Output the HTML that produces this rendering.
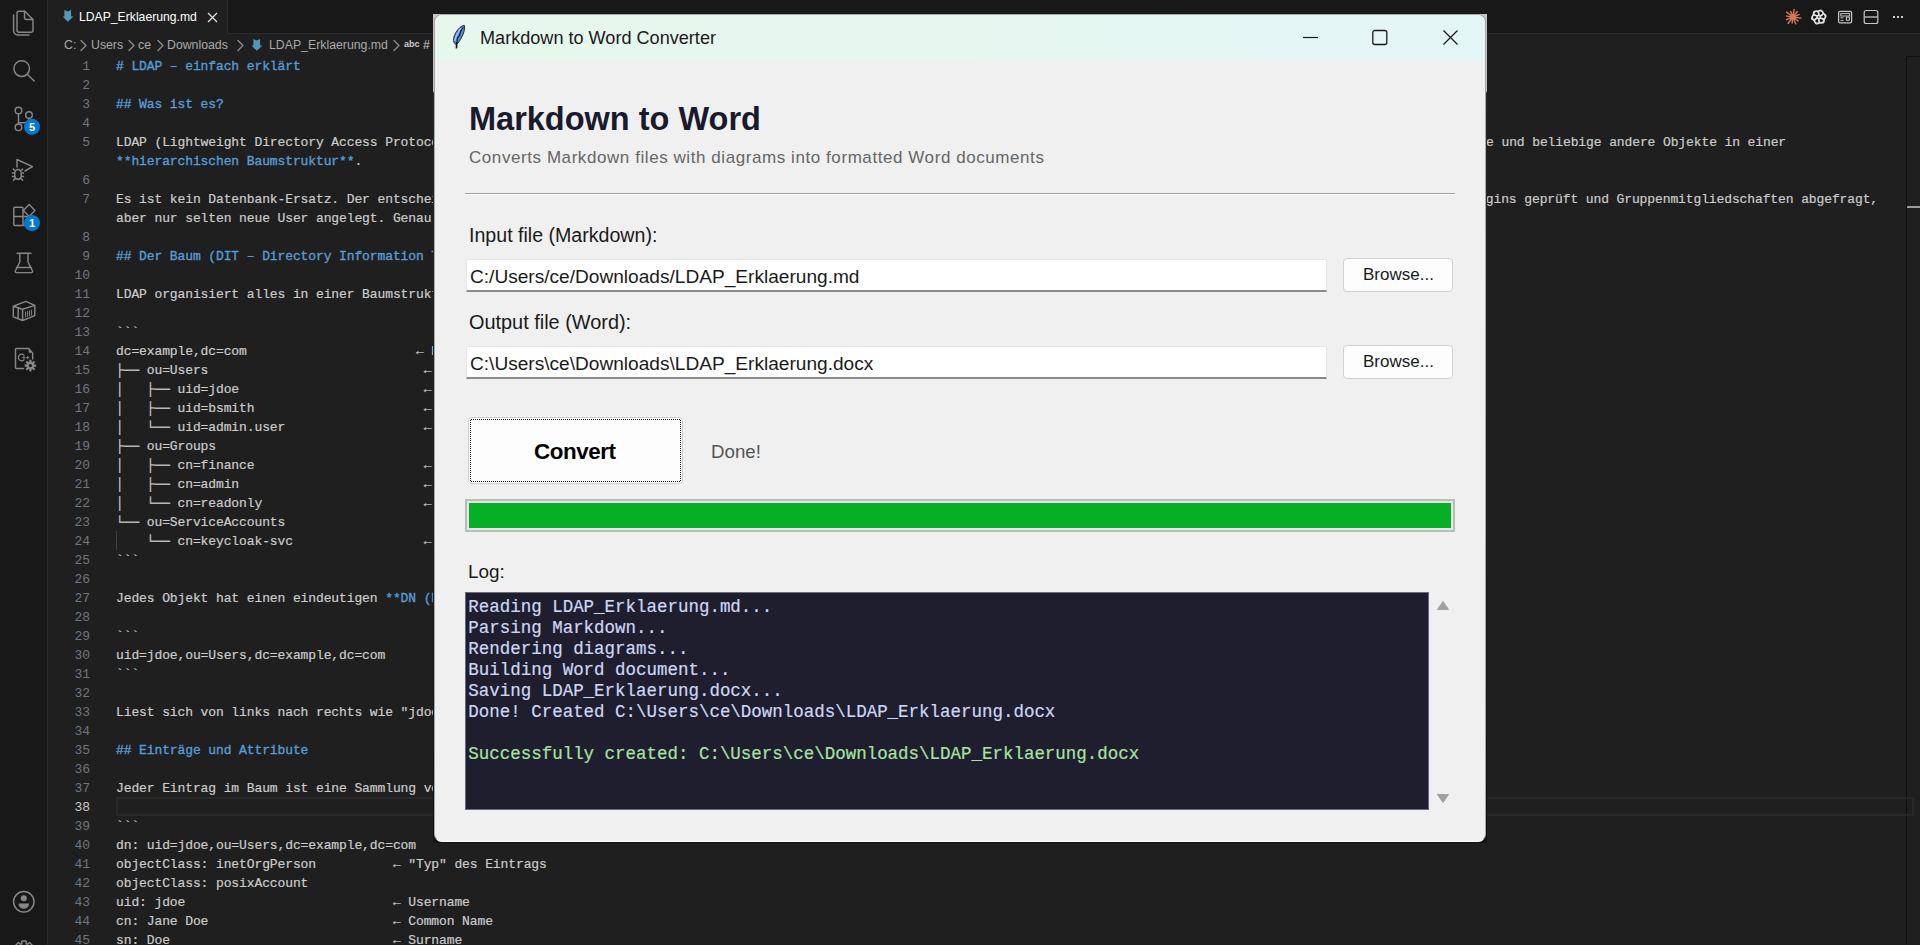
<!DOCTYPE html>
<html><head><meta charset="utf-8">
<style>
*{box-sizing:border-box;margin:0;padding:0}
html,body{width:1920px;height:945px;overflow:hidden;background:#1f1f1f;font-family:"Liberation Sans",sans-serif}
.abs{position:absolute}
#act{position:absolute;left:0;top:0;width:48px;height:945px;background:#181818;border-right:1px solid #2b2b2b}
#tabs{position:absolute;left:48px;top:0;width:1872px;height:34px;background:#181818;border-bottom:1px solid #2b2b2b}
#tab{position:absolute;left:48px;top:0;width:180px;height:34px;background:#1f1f1f;border-right:1px solid #2b2b2b}
.bc{position:absolute;top:37px;font-size:12.3px;color:#a9a9a9;white-space:pre;line-height:16px}
.ln{position:absolute;left:40px;width:50px;text-align:right;font-family:"Liberation Mono",monospace;font-size:13px;letter-spacing:-0.11px;color:#6e7681;line-height:19px;height:19px}
.ln.act{color:#cccccc}
.tx{position:absolute;left:116px;font-family:"Liberation Mono",monospace;font-size:13px;letter-spacing:-0.11px;color:#cccccc;line-height:19px;height:19px;white-space:pre;-webkit-text-stroke:0.2px #cccccc}
.h,.b{color:#569cd6;-webkit-text-stroke:0.35px #569cd6}
.g{color:#cccccc}
svg{position:absolute;overflow:visible}
.ic{fill:none;stroke:#868686;stroke-width:1.45;stroke-linejoin:round;stroke-linecap:round}
/* dialog */
#frame{position:absolute;left:433px;top:14px;width:1054px;height:829px;background:linear-gradient(to bottom,#c4c4c4 0px,#c4c4c4 77px,#2a2a2a 79px,#121212 100%)}
#win{position:absolute;left:434px;top:14px;width:1052px;height:828px;border-radius:8px;background:#f0f0f0;overflow:hidden;border:1px solid #a8a8a8;border-bottom-color:#ffffff}
#title{position:absolute;left:0;top:0;width:100%;height:46px;background:linear-gradient(to right,#e6f7ee 0%,#e6f7ef 45%,#e3f6f6 100%)}
.dl{position:absolute;white-space:pre;color:#1a1a1a}
.entry{position:absolute;background:#ffffff;border:1px solid #e6e6e6;border-bottom:2px solid #8b8b8b;border-radius:2px 2px 0 0}
.btn{position:absolute;background:#fdfdfd;border:1px solid #d0d0d0;border-radius:4px}
#log{position:absolute;left:465px;top:592px;width:964px;height:218px;background:#1e1e2e;border:1px solid #6a6a7a}
.lg{position:absolute;left:468.3px;font-family:"Liberation Mono",monospace;font-size:17.48px;line-height:21px;color:#cdd6f4;white-space:pre;-webkit-text-stroke:0.2px currentColor}

</style></head>
<body>
<div id="act"></div>
<div id="tabs"></div>
<div id="tab"></div>
<!-- tab icon + text -->
<svg style="left:62px;top:10px" width="12" height="13" viewBox="0 0 12 13"><path d="M2.4 0L5.8 1.6L9.1 0V6.4H11.5L5.8 11.8L0.5 6.4H2.4z" fill="#519aba"/></svg>
<div class="abs" style="left:79px;top:9px;font-size:12.2px;color:#ffffff;white-space:pre;line-height:16px">LDAP_Erklaerung.md</div>
<svg style="left:207px;top:12px" width="11" height="11" viewBox="0 0 11 11"><path d="M1 1L10 10M10 1L1 10" stroke="#e0e0e0" stroke-width="1.3"/></svg>

<!-- breadcrumbs -->
<div class="bc" style="left:64px">C:</div>
<svg style="left:80px;top:40px" width="7" height="11"><path d="M1 0.5L6 5.5L1 10.5" class="ic" stroke="#a9a9a9"/></svg>
<div class="bc" style="left:91px">Users</div>
<svg style="left:128px;top:40px" width="7" height="11"><path d="M1 0.5L6 5.5L1 10.5" class="ic" stroke="#a9a9a9"/></svg>
<div class="bc" style="left:138px">ce</div>
<svg style="left:157px;top:40px" width="7" height="11"><path d="M1 0.5L6 5.5L1 10.5" class="ic" stroke="#a9a9a9"/></svg>
<div class="bc" style="left:167px">Downloads</div>
<svg style="left:237px;top:40px" width="7" height="11"><path d="M1 0.5L6 5.5L1 10.5" class="ic" stroke="#a9a9a9"/></svg>
<svg style="left:251px;top:39px" width="12" height="13" viewBox="0 0 12 13"><path d="M2.4 0L5.8 1.6L9.1 0V6.4H11.5L5.8 11.8L0.5 6.4H2.4z" fill="#519aba"/></svg>
<div class="bc" style="left:269px">LDAP_Erklaerung.md</div>
<svg style="left:393px;top:40px" width="7" height="11"><path d="M1 0.5L6 5.5L1 10.5" class="ic" stroke="#a9a9a9"/></svg>
<div class="abs" style="left:404px;top:39px;font-size:9px;font-weight:bold;color:#cccccc;line-height:10px">abc</div>
<div class="abs" style="left:423px;top:37px;font-size:12.3px;color:#cccccc;line-height:16px">#</div>

<!-- activity bar icons -->
<svg style="left:0;top:0" width="48" height="400">
 <g class="ic">
  <path d="M13.6 15v15.5a4.5 4.5 0 0 0 4.5 4.5h11"/>
  <path d="M17 13.2a2 2 0 0 1 2-2h5.8l8.2 8.2v10.8a2 2 0 0 1-2 2h-12a2 2 0 0 1-2-2z"/>
  <path d="M24.5 11.5v6a2 2 0 0 0 2 2h6"/>
  <circle cx="21.7" cy="68.6" r="7.8"/>
  <path d="M27.3 74.2L34.2 81"/>
  <circle cx="18.5" cy="110.5" r="3.3"/>
  <circle cx="29" cy="115" r="3.3"/>
  <circle cx="18.5" cy="127.3" r="3.3"/>
  <path d="M18.5 113.8v10.2M29 118.3q0 4 -5 4.5h-5.5"/>
  <path d="M17 167V159.5L32.5 166.6L25 171"/>
  <path d="M14.8 173.2a3.2 3.6 0 0 1 6.4 0v2.8a3.2 3.2 0 0 1-6.4 0z M12.5 173h2.3M21.2 173h2.3M12.5 176.5h2.3M21.2 176.5h2.3M13.3 169l1.8 1.8M22.7 169l-1.8 1.8M13.3 180.2l1.8-1.6M22.7 180.2l-1.8-1.6"/>
  <rect x="13.8" y="207.3" width="9.2" height="18.2" rx="1"/><path d="M13.8 216.4h17.2a1 1 0 0 1 1 1v7.2a1 1 0 0 1-1 1h-8"/>
  <path d="M29.2 204.6l5.8 5.8-5.8 5.8-5.8-5.8z"/>
  <path d="M17 253.3h14M19.8 253.5v8.5l-4.5 9a1.2 1.2 0 0 0 1 1.6h15.2a1.2 1.2 0 0 0 1-1.6l-4.5-9v-8.5M16.5 267.4h15"/>
  <path d="M13.3 306.2L25.8 301.4L34.8 305.4V315.6L22.6 320.5L13.3 316.8z M13.3 306.2L22.6 309.3L34.8 305.4 M22.6 309.3V320.5 M18.2 307.8V318.6"/>
  <path d="M25.6 312v5M27.6 311.3v5M29.6 310.6v5M31.6 310v5" stroke-width="1"/>
  <path d="M23.5 368.5H16.5a1 1 0 0 1-1-1V349.5a1 1 0 0 1 1-1H28.7L32.7 353.2V359"/>
  <path d="M24 355.2a3.3 3.3 0 1 0 0 4.6" stroke-width="1.2"/>
  <path d="M22.6 357.6h2.6M23.9 356.3v2.6M26.4 357.6h2.6M27.7 356.3v2.6" stroke-width="0.9"/>
 </g>
 <path d="M28.7 353.5V348.8L32.5 352.7H28.7z" fill="#868686"/>
 <circle cx="30.4" cy="365.6" r="5.6" fill="#181818"/>
 <path d="M30.4 365.6m-4 0a4 4 0 1 0 8 0a4 4 0 1 0 -8 0" fill="#868686"/>
 <g stroke="#868686" stroke-width="2.2"><path d="M30.4 359.8v11.6M24.6 365.6h11.6M26.3 361.5l8.2 8.2M34.5 361.5l-8.2 8.2"/></g>
 <circle cx="30.4" cy="365.6" r="1.6" fill="#181818"/>
 <circle cx="32" cy="126.8" r="8" fill="#0078d4"/>
 <text x="32" y="131" font-family="Liberation Sans" font-size="11" font-weight="bold" fill="#fff" text-anchor="middle">5</text>
 <circle cx="32" cy="223" r="8" fill="#0078d4"/>
 <text x="32" y="227.2" font-family="Liberation Sans" font-size="11" font-weight="bold" fill="#fff" text-anchor="middle">1</text>
</svg>
<svg style="left:0;top:880px" width="48" height="65">
 <circle cx="23.8" cy="21.7" r="10.2" class="ic"/>
 <circle cx="23.8" cy="18.3" r="3" fill="#868686"/>
 <path d="M18.5 23.5h10.6a5.3 5.3 0 0 1 -10.6 0z" fill="#868686"/>
 <path d="M21.78 63.73 L21.88 61.02 L26.12 61.02 L26.22 63.73 L27.57 64.29 L29.56 62.45 L32.55 65.44 L30.71 67.43 L31.27 68.78 L33.98 68.88 L33.98 73.12 L31.27 73.22 L30.71 74.57 L32.55 76.56 L29.56 79.55 L27.57 77.71 L26.22 78.27 L26.12 80.98 L21.88 80.98 L21.78 78.27 L20.43 77.71 L18.44 79.55 L15.45 76.56 L17.29 74.57 L16.73 73.22 L14.02 73.12 L14.02 68.88 L16.73 68.78 L17.29 67.43 L15.45 65.44 L18.44 62.45 L20.43 64.29z" class="ic"/><circle cx="24" cy="71" r="3" class="ic"/>
</svg>

<!-- right toolbar icons -->
<svg style="left:1780px;top:4px" width="130" height="26">
 <path d="M13 13L20.92 14.11 M13 13L18.12 17.00 M13 13L15.81 19.95 M13 13L12.16 18.94 M13 13L8.07 19.30 M13 13L6.51 15.62 M13 13L6.56 12.10 M13 13L6.70 8.07 M13 13L10.75 7.44 M13 13L14.04 5.57 M13 13L17.31 7.48 M13 13L19.03 10.57" stroke="#d97757" stroke-width="1.45" stroke-linecap="round"/>
 <circle cx="13" cy="13" r="2.6" fill="#d97757"/>
 <g fill="none" stroke="#e6e6e6" stroke-width="1.15"><rect x="39.40" y="5.80" width="4.6" height="9.6" rx="2.3" transform="rotate(0 38.8 13) rotate(-30 41.70 10.60)"/><rect x="39.40" y="5.80" width="4.6" height="9.6" rx="2.3" transform="rotate(60 38.8 13) rotate(-30 41.70 10.60)"/><rect x="39.40" y="5.80" width="4.6" height="9.6" rx="2.3" transform="rotate(120 38.8 13) rotate(-30 41.70 10.60)"/><rect x="39.40" y="5.80" width="4.6" height="9.6" rx="2.3" transform="rotate(180 38.8 13) rotate(-30 41.70 10.60)"/><rect x="39.40" y="5.80" width="4.6" height="9.6" rx="2.3" transform="rotate(240 38.8 13) rotate(-30 41.70 10.60)"/><rect x="39.40" y="5.80" width="4.6" height="9.6" rx="2.3" transform="rotate(300 38.8 13) rotate(-30 41.70 10.60)"/></g>
 <g fill="none" stroke="#c8c8c8" stroke-width="1.2">
  <rect x="58.6" y="7.3" width="13" height="11.6" rx="1.5"/>
  <rect x="60.8" y="9.6" width="8.8" height="2.4" stroke-width="1"/>
  <path d="M60.5 13.8h3M60.5 16.4h3" stroke-width="1"/>
  <rect x="66.4" y="13.2" width="3" height="3" stroke-width="1"/>
  <rect x="84.2" y="6.5" width="13.6" height="13" rx="2"/>
  <path d="M84.2 13h13.6" stroke-width="1.6" stroke="#a8a8a8"/>
 </g>
 <g fill="#cccccc"><rect x="113" y="12" width="2" height="2"/><rect x="117" y="12" width="2" height="2"/><rect x="121" y="12" width="2" height="2"/></g>
</svg>

<!-- overview ruler -->
<div class="abs" style="left:1906px;top:56px;width:1px;height:889px;background:#0e0e10"></div><div class="abs" style="left:1906px;top:56px;width:14px;height:1px;background:#0e0e10"></div>
<div class="abs" style="left:1907px;top:206px;width:13px;height:2px;background:#9a9a9a"></div>
<!-- current line highlight -->
<div class="abs" style="left:116px;top:797px;width:1798px;height:19px;border:2px solid #282828"></div>
<!-- indent guide line 24 -->
<div class="abs" style="left:116px;top:531px;width:1px;height:19px;background:#404040"></div>

<div class="ln" style="top:57px">1</div>
<div class="tx" style="top:57px"><span class="h"># LDAP – einfach erklärt</span></div>
<div class="ln" style="top:76px">2</div>
<div class="ln" style="top:95px">3</div>
<div class="tx" style="top:95px"><span class="h">## Was ist es?</span></div>
<div class="ln" style="top:114px">4</div>
<div class="ln" style="top:133px">5</div>
<div class="tx" style="top:133px">LDAP (Lightweight Directory Access Protocol) ist ein Protokoll, mit dem Benutzer, Gruppe</div>
<div class="tx" style="top:152px"><span class="b">**hierarchischen Baumstruktur**</span>.</div>
<div class="ln" style="top:171px">6</div>
<div class="ln" style="top:190px">7</div>
<div class="tx" style="top:190px">Es ist kein Datenbank-Ersatz. Der entscheidende Punkt: LDAP wird sehr oft gelesen</div>
<div class="tx" style="top:209px">aber nur selten neue User angelegt. Genau dafür ist LDAP optimiert.</div>
<div class="ln" style="top:228px">8</div>
<div class="ln" style="top:247px">9</div>
<div class="tx" style="top:247px"><span class="h">## Der Baum (DIT – Directory Information Tree)</span></div>
<div class="ln" style="top:266px">10</div>
<div class="ln" style="top:285px">11</div>
<div class="tx" style="top:285px">LDAP organisiert alles in einer Baumstruktur. Ganz oben steht die Wurzel.</div>
<div class="ln" style="top:304px">12</div>
<div class="ln" style="top:323px">13</div>
<div class="tx" style="top:323px"><span class="g">```</span></div>
<div class="ln" style="top:342px">14</div>
<div class="tx" style="top:342px">dc=example,dc=com                      ← Root (Domain)</div>
<div class="ln" style="top:361px">15</div>
<div class="tx" style="top:361px">├── ou=Users                            ← Organisationseinheit</div>
<div class="ln" style="top:380px">16</div>
<div class="tx" style="top:380px">│   ├── uid=jdoe                        ← Benutzer</div>
<div class="ln" style="top:399px">17</div>
<div class="tx" style="top:399px">│   ├── uid=bsmith                      ← Benutzer</div>
<div class="ln" style="top:418px">18</div>
<div class="tx" style="top:418px">│   └── uid=admin.user                  ← Benutzer</div>
<div class="ln" style="top:437px">19</div>
<div class="tx" style="top:437px">├── ou=Groups</div>
<div class="ln" style="top:456px">20</div>
<div class="tx" style="top:456px">│   ├── cn=finance                      ← Gruppe</div>
<div class="ln" style="top:475px">21</div>
<div class="tx" style="top:475px">│   ├── cn=admin                        ← Gruppe</div>
<div class="ln" style="top:494px">22</div>
<div class="tx" style="top:494px">│   └── cn=readonly                     ← Gruppe</div>
<div class="ln" style="top:513px">23</div>
<div class="tx" style="top:513px">└── ou=ServiceAccounts</div>
<div class="ln" style="top:532px">24</div>
<div class="tx" style="top:532px">    └── cn=keycloak-svc                 ← Service-User</div>
<div class="ln" style="top:551px">25</div>
<div class="tx" style="top:551px"><span class="g">```</span></div>
<div class="ln" style="top:570px">26</div>
<div class="ln" style="top:589px">27</div>
<div class="tx" style="top:589px">Jedes Objekt hat einen eindeutigen <span class="b">**DN (Distinguished Name)**</span></div>
<div class="ln" style="top:608px">28</div>
<div class="ln" style="top:627px">29</div>
<div class="tx" style="top:627px"><span class="g">```</span></div>
<div class="ln" style="top:646px">30</div>
<div class="tx" style="top:646px">uid=jdoe,ou=Users,dc=example,dc=com</div>
<div class="ln" style="top:665px">31</div>
<div class="tx" style="top:665px"><span class="g">```</span></div>
<div class="ln" style="top:684px">32</div>
<div class="ln" style="top:703px">33</div>
<div class="tx" style="top:703px">Liest sich von links nach rechts wie "jdoe in Users in example.com".</div>
<div class="ln" style="top:722px">34</div>
<div class="ln" style="top:741px">35</div>
<div class="tx" style="top:741px"><span class="h">## Einträge und Attribute</span></div>
<div class="ln" style="top:760px">36</div>
<div class="ln" style="top:779px">37</div>
<div class="tx" style="top:779px">Jeder Eintrag im Baum ist eine Sammlung von Attributen:</div>
<div class="ln act" style="top:798px">38</div>
<div class="ln" style="top:817px">39</div>
<div class="tx" style="top:817px"><span class="g">```</span></div>
<div class="ln" style="top:836px">40</div>
<div class="tx" style="top:836px">dn: uid=jdoe,ou=Users,dc=example,dc=com</div>
<div class="ln" style="top:855px">41</div>
<div class="tx" style="top:855px">objectClass: inetOrgPerson          ← "Typ" des Eintrags</div>
<div class="ln" style="top:874px">42</div>
<div class="tx" style="top:874px">objectClass: posixAccount</div>
<div class="ln" style="top:893px">43</div>
<div class="tx" style="top:893px">uid: jdoe                           ← Username</div>
<div class="ln" style="top:912px">44</div>
<div class="tx" style="top:912px">cn: Jane Doe                        ← Common Name</div>
<div class="ln" style="top:931px">45</div>
<div class="tx" style="top:931px">sn: Doe                             ← Surname</div>
<div class="tx" style="top:133px;left:1486.09px">e und beliebige andere Objekte in einer</div>
<div class="tx" style="top:190px;left:1485.81px">gins geprüft und Gruppenmitgliedschaften abgefragt,</div>


<!-- dialog -->
<div id="frame"></div>
<div id="win">
 <div id="title"></div>
</div>
<svg style="left:448px;top:22px" width="24" height="30" viewBox="0 0 24 30">
 <path d="M16.3 3.3C17 5 16.5 9 15 12.5C13.5 16 11.5 19.5 9.3 21.8L7.8 22.3C6 21.5 5.2 19.5 5.6 16.5C6.2 12.5 9 8 12 5.5C13.5 4.2 15 3.3 16.3 3.3z" fill="#4f86dc" stroke="#2e2e2e" stroke-width="1"/>
 <path d="M7 19C7.5 15 9.5 10.5 13 6.5" stroke="#9cc0f2" stroke-width="1.6" fill="none"/>
 <path d="M15.5 5L12.5 9.5L11.5 13.5L9.5 16L9 20.5" stroke="#1a1a1a" stroke-width="1.1" fill="none"/>
 <path d="M8.8 20L8.4 26.5" stroke="#111" stroke-width="1.6"/>
</svg>
<div class="dl" style="left:480px;top:28px;font-size:18.1px;color:#1a1a1a;line-height:21px">Markdown to Word Converter</div>
<svg style="left:1300px;top:28px" width="170" height="20">
 <path d="M3 9.5h15" stroke="#1a1a1a" stroke-width="1.2"/>
 <rect x="72.8" y="2.5" width="14" height="14" rx="2" fill="none" stroke="#1a1a1a" stroke-width="1.3"/>
 <path d="M143.5 2.5l14 14M157.5 2.5l-14 14" stroke="#1a1a1a" stroke-width="1.3"/>
</svg>

<div class="dl" style="left:469px;top:100.5px;font-size:32.5px;font-weight:bold;color:#1a1a2e;line-height:37px">Markdown to Word</div>
<div class="dl" style="left:469px;top:148px;font-size:17px;letter-spacing:0.57px;color:#666666;line-height:20px">Converts Markdown files with diagrams into formatted Word documents</div>
<div class="abs" style="left:465px;top:193px;width:990px;height:1px;background:#a0a0a0"></div>
<div class="abs" style="left:465px;top:194px;width:990px;height:1px;background:#ffffff"></div>

<div class="dl" style="left:469px;top:224px;font-size:19.6px;line-height:23px">Input file (Markdown):</div>
<div class="entry" style="left:466px;top:259px;width:861px;height:33px"></div>
<div class="dl" style="left:470px;top:265px;font-size:19.1px;line-height:23px">C:/Users/ce/Downloads/LDAP_Erklaerung.md</div>
<div class="btn" style="left:1343px;top:258px;width:110px;height:34px"></div>
<div class="dl" style="left:1363px;top:264px;font-size:17px;line-height:21px">Browse...</div>

<div class="dl" style="left:469px;top:311px;font-size:19.9px;line-height:23px">Output file (Word):</div>
<div class="entry" style="left:466px;top:346px;width:861px;height:33px"></div>
<div class="dl" style="left:470px;top:352px;font-size:19.1px;line-height:23px">C:\Users\ce\Downloads\LDAP_Erklaerung.docx</div>
<div class="btn" style="left:1343px;top:345px;width:110px;height:34px"></div>
<div class="dl" style="left:1363px;top:351px;font-size:17px;line-height:21px">Browse...</div>

<div class="btn" style="left:468px;top:417px;width:215px;height:67px"></div>
<div class="abs" style="left:471px;top:419px;width:209px;height:1px;background:repeating-linear-gradient(to right,#1a1a1a 0 1px,transparent 1px 2px)"></div>
<div class="abs" style="left:471px;top:481px;width:209px;height:1px;background:repeating-linear-gradient(to right,#1a1a1a 0 1px,transparent 1px 2px)"></div>
<div class="abs" style="left:470px;top:420px;width:1px;height:61px;background:repeating-linear-gradient(to bottom,#1a1a1a 0 1px,transparent 1px 2px)"></div>
<div class="abs" style="left:680px;top:420px;width:1px;height:61px;background:repeating-linear-gradient(to bottom,#1a1a1a 0 1px,transparent 1px 2px)"></div>
<div class="dl" style="left:534px;top:439px;letter-spacing:-0.45px;font-size:22.4px;font-weight:bold;color:#000;line-height:25px">Convert</div>
<div class="dl" style="left:711px;top:441px;font-size:18.7px;color:#555555;line-height:22px">Done!</div>

<div class="abs" style="left:465px;top:499px;width:990px;height:33px;background:#e6e6e6;border:2px solid #bcbcbc"></div>
<div class="abs" style="left:469px;top:503px;width:982px;height:25px;background:#06b025"></div>

<div class="dl" style="left:468px;top:561px;font-size:18.9px;line-height:22px">Log:</div>
<div id="log"></div>
<div class="lg" style="top:596.5px">Reading LDAP_Erklaerung.md...
Parsing Markdown...
Rendering diagrams...
Building Word document...
Saving LDAP_Erklaerung.docx...
Done! Created C:\Users\ce\Downloads\LDAP_Erklaerung.docx
</div>
<div class="lg" style="top:743.5px;color:#a6e3a1">Successfully created: C:\Users\ce\Downloads\LDAP_Erklaerung.docx</div>
<svg style="left:1436px;top:600px" width="14" height="205">
 <path d="M1.5 9.5L7 1.5L12.5 9.5z" fill="#a0a0a0" stroke="#a0a0a0" stroke-width="1" stroke-linejoin="round"/>
 <path d="M1.5 194.5L7 202.5L12.5 194.5z" fill="#a0a0a0" stroke="#a0a0a0" stroke-width="1" stroke-linejoin="round"/>
</svg>

</body></html>
